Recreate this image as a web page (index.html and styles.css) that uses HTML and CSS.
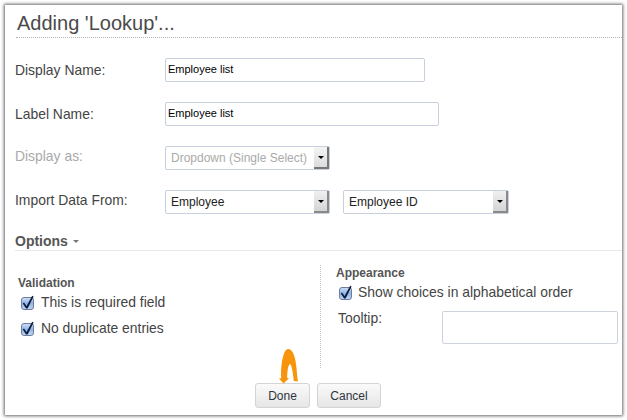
FILE: index.html
```html
<!DOCTYPE html>
<html lang="en">
<head>
<meta charset="utf-8">
<title>Adding 'Lookup'</title>
<link rel="stylesheet" href="styles.css">
</head>
<body>
<svg class="defs" width="0" height="0" aria-hidden="true">
  <defs>
    <linearGradient id="cbfill" x1="0" y1="0" x2="0" y2="1">
      <stop offset="0" stop-color="#cfe0f8"/>
      <stop offset="0.5" stop-color="#8fb4ea"/>
      <stop offset="1" stop-color="#c2d8f7"/>
    </linearGradient>
    <symbol id="cb" viewBox="0 0 14 15">
      <rect x="0.5" y="2.5" width="12" height="12" rx="2.5" fill="url(#cbfill)" stroke="#6f7c9c"/>
      <path d="M3 7.6 L5.6 11 L11.2 0.8 L12.6 1.4 L6.6 13.4 L5 13.4 L1.8 8.6 Z" fill="#111c36"/>
    </symbol>
  </defs>
</svg>
<main class="window">
  <h1 class="title">Adding 'Lookup'...</h1>
  <section class="form">
    <div class="row">
      <label class="label label-low">Display Name:</label>
      <div class="input input-display">Employee list</div>
    </div>
    <div class="row">
      <label class="label label-low">Label Name:</label>
      <div class="input input-label">Employee list</div>
    </div>
    <div class="row row-disabled">
      <label class="label">Display as:</label>
      <div class="select"><span class="select-text">Dropdown (Single Select)</span><span class="select-btn"><i class="tri"></i></span></div>
    </div>
    <div class="row">
      <label class="label">Import Data From:</label>
      <div class="select"><span class="select-text">Employee</span><span class="select-btn"><i class="tri"></i></span></div>
      <div class="select select-second"><span class="select-text">Employee ID</span><span class="select-btn"><i class="tri"></i></span></div>
    </div>
  </section>
  <div class="options"><span>Options</span><i class="options-caret"></i></div>
  <section class="columns">
    <div class="col col-left">
      <h2 class="group">Validation</h2>
      <div class="check"><svg class="cb"><use href="#cb"/></svg><span>This is required field</span></div>
      <div class="check"><svg class="cb"><use href="#cb"/></svg><span>No duplicate entries</span></div>
    </div>
    <div class="col col-right">
      <h2 class="group">Appearance</h2>
      <div class="check"><svg class="cb"><use href="#cb"/></svg><span>Show choices in alphabetical order</span></div>
      <div class="tooltip-row">
        <span class="tooltip-label">Tooltip:</span>
        <div class="textarea"></div>
      </div>
    </div>
  </section>
  <footer class="actions">
    <div class="btn-wrap">
      <svg class="arrow" width="22" height="37" viewBox="0 0 22 37" aria-hidden="true">
        <path d="M10 1 C15 1 17.5 9 18.5 20 C19 26 19.3 30 20 33.5 L15.8 33 C15 26 14 17 12 16 C10 17 9.3 23 9.2 30 L11 30.3 L5.5 35.5 L1 30.5 L3.2 30.2 C2.6 18 5 1.5 10 1 Z" fill="#f7940c"/>
      </svg>
      <button class="btn btn-done" type="button">Done</button>
    </div>
    <button class="btn btn-cancel" type="button">Cancel</button>
  </footer>
</main>
</body>
</html>
```
FILE: styles.css
```css
* { box-sizing: border-box; }
html, body { margin: 0; padding: 0; background: #fff; }
body {
  width: 627px;
  height: 420px;
  overflow: hidden;
  font-family: "Liberation Sans", Arial, sans-serif;
  color: #444;
}
.defs { position: absolute; }
.window {
  margin: 5px 0 0 5px;
  width: 617px;
  height: 410px;
  background: #fff;
  box-shadow: 0 0 3px 1px rgba(0, 0, 0, 0.6);
  display: flex;
  flex-direction: column;
}
.title {
  margin: 0 0 0 11px;
  height: 33px;
  padding: 6px 0 0 1px;
  font-size: 20px;
  line-height: 24px;
  font-weight: 400;
  color: #4a4a4a;
  border-bottom: 1px dotted #b5b5b5;
}
.form {
  display: flex;
  flex-direction: column;
  gap: 20px;
  padding: 20px 0 0 10px;
}
.row { display: flex; align-items: flex-start; height: 24px; }
.label {
  width: 150px;
  font-size: 13.9px;
  line-height: 20px;
  color: #444;
}
.label-low { line-height: 24px; }
.row-disabled .label { color: #aaa; }
.input {
  height: 24px;
  border: 1px solid #c8d0de;
  border-radius: 2px;
  padding-left: 2px;
  font-size: 11px;
  line-height: 21px;
  color: #000;
  background: #fff;
}
.input-display { width: 260px; }
.input-label { width: 274px; }
.select {
  width: 165px;
  height: 24px;
  border: 1px solid #c8d0de;
  border-radius: 2px;
  display: flex;
  align-items: stretch;
  background: #fff;
}
.select-second { margin-left: 13px; width: 166px; }
.select-text {
  flex: 1;
  padding-left: 5px;
  font-size: 12px;
  line-height: 22px;
  color: #222;
}
.row-disabled .select-text { color: #aaa; }
.select-btn {
  width: 15px;
  display: flex;
  align-items: center;
  justify-content: center;
  background: linear-gradient(#f0f0f0, #d4d4d4);
  border-right: 2px solid #8a8a8a;
  border-bottom: 2px solid #8a8a8a;
}
.row-disabled .select-btn { border-color: #777; background: linear-gradient(#f4f4f4, #dcdcdc); }
.tri {
  width: 0;
  height: 0;
  border-left: 3px solid transparent;
  border-right: 3px solid transparent;
  border-top: 3px solid #000;
}
.options {
  margin: 19px 0 0 10px;
  height: 18px;
  border-bottom: 1px solid #e8e8e8;
  font-size: 14px;
  line-height: 16px;
  font-weight: 700;
  color: #555;
  display: flex;
  align-items: flex-start;
}
.options-caret {
  margin: 7px 0 0 5px;
  width: 0;
  height: 0;
  border-left: 3.5px solid transparent;
  border-right: 3.5px solid transparent;
  border-top: 3.5px solid #777;
}
.columns { display: flex; height: 103px; margin-top: 14px; }
.col-left { width: 300px; padding: 11px 0 0 13px; margin-right: 15px; }
.col-left .group + .check { margin-top: 2px; }
.col-right {
  flex: 1;
  padding: 1px 0 0 15px;
  border-left: 1px dotted #c4c4c4;
}
.group {
  margin: 0;
  font-size: 12px;
  line-height: 14px;
  font-weight: 700;
  color: #555;
}
.check {
  display: flex;
  align-items: flex-start;
  height: 26px;
  padding-left: 3px;
  font-size: 13.9px;
  line-height: 20px;
  color: #444;
}
.cb { width: 14px; height: 15px; margin: 3px 6px 0 0; flex: none; }
.col-right .check { height: 23px; margin-top: 2px; }
.col-right .cb { margin-right: 5px; }
.tooltip-row { display: flex; align-items: flex-start; padding-left: 2px; margin-top: 5px; }
.tooltip-label { width: 104px; font-size: 13.9px; line-height: 16px; color: #444; }
.textarea {
  width: 176px;
  height: 33px;
  margin-top: 1px;
  border: 1px solid #ccd3df;
  border-radius: 2px;
  background: #fff;
}
.actions {
  display: flex;
  gap: 7px;
  margin-top: 15px;
  padding-left: 250px;
}
.btn-wrap { position: relative; display: flex; }
.btn {
  height: 25px;
  padding: 0;
  border: 1px solid #d4d4d4;
  border-radius: 3px;
  background: linear-gradient(#fafafa, #e6e6e6);
  font-family: "Liberation Sans", Arial, sans-serif;
  font-size: 12px;
  color: #2e3440;
}
.btn-done { width: 55px; }
.btn-cancel { width: 64px; }
.arrow { position: absolute; left: 23px; top: -35px; }
```
